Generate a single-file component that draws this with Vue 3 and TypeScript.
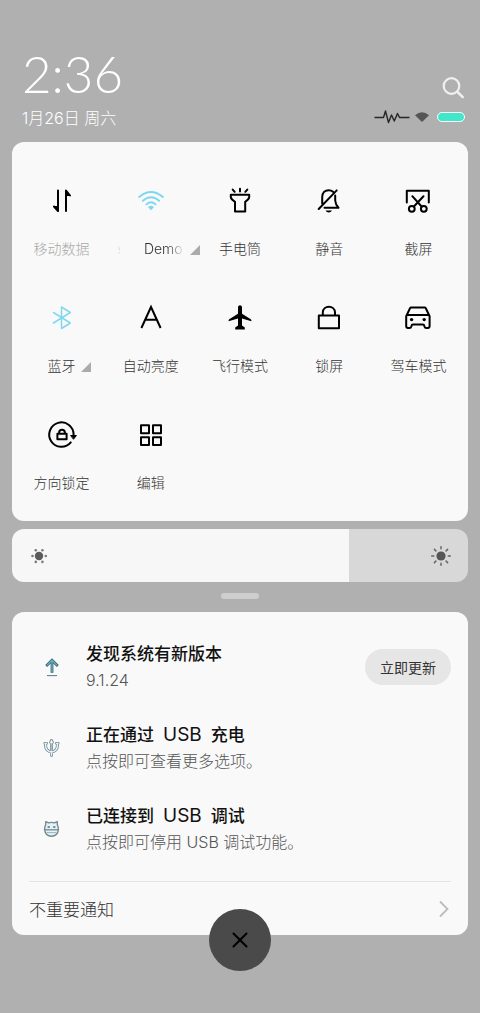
<script setup lang="ts">
import { computed, ref } from 'vue'

interface Tile {
  id: string
  label: string
  state?: 'on' | 'disabled'
  more?: boolean
}

interface Notice {
  id: string
  title: string[]
  text: string
  action?: string
}

const tiles: Tile[] = [
  { id: 'data', label: '移动数据', state: 'disabled' },
  { id: 'wifi', label: 'Demo', state: 'on', more: true },
  { id: 'torch', label: '手电筒' },
  { id: 'mute', label: '静音' },
  { id: 'shot', label: '截屏' },
  { id: 'bluetooth', label: '蓝牙', state: 'on', more: true },
  { id: 'auto', label: '自动亮度' },
  { id: 'plane', label: '飞行模式' },
  { id: 'lock', label: '锁屏' },
  { id: 'car', label: '驾车模式' },
  { id: 'rotate', label: '方向锁定' },
  { id: 'edit', label: '编辑' },
]

const notices: Notice[] = [
  { id: 'update', title: ['发现系统有新版本'], text: '9.1.24', action: '立即更新' },
  { id: 'usb', title: ['正在通过', 'USB', '充电'], text: '点按即可查看更多选项。' },
  { id: 'debug', title: ['已连接到', 'USB', '调试'], text: '点按即可停用 USB 调试功能。' },
]

const brightness = ref(74)
const fill = computed(() => ({ '--level': brightness.value + '%' }))
</script>

<template>
  <main class="shade">
    <header class="head">
      <div>
        <div class="time">2:36</div>
        <div class="date">1月26日 周六</div>
      </div>
      <div class="side">
        <button class="search" type="button" aria-label="搜索">
          <svg width="24" height="24" viewBox="0 0 24 24" fill="none" stroke="#f0f0f0" stroke-width="2.2" stroke-linecap="round">
            <circle cx="10.5" cy="10" r="7.8" /><path d="M16.2 15.7 21.7 21.2" stroke-width="2.6" />
          </svg>
        </button>
        <div class="status">
          <svg width="36" height="14" viewBox="0 0 36 14" fill="none" stroke="#262626" stroke-width="1.4" stroke-linejoin="round">
            <path d="M0.5 7.5H9.5L11.5 1 14.5 12.5 17.5 5 20.3 11 23.5 3.5 25.5 7.5H35.5" />
          </svg>
          <svg width="14" height="10" viewBox="0 0 14 10" fill="#555"><path d="M0 3.2Q7-2.8 14 3.2L7 10Z" /></svg>
          <span class="battery"></span>
        </div>
      </div>
    </header>

    <section class="panel tiles">
      <button v-for="t in tiles" :key="t.id" type="button" class="tile" :class="t.state">
        <svg class="icon" viewBox="0 0 32 32" fill="none" stroke="currentColor" stroke-width="2" stroke-linecap="round" stroke-linejoin="round">
          <g v-if="t.id === 'data'">
            <path d="M12 5.5V26L8 21.5M20 26V5.5L24 10.5" />
            <path d="M12 26 8 21.5H12ZM20 5.5 24 10.5H20Z" fill="currentColor" stroke-width="1" />
          </g>
          <g v-else-if="t.id === 'wifi'" stroke-width="1.9">
            <path d="M4 12Q16 1.8 28 12M7.8 15.8Q16 8.6 24.2 15.8M11.4 19.4Q16 15.2 20.6 19.4" />
            <path d="M13 22.2Q16 19.4 19 22.2L16 25.2Z" fill="currentColor" stroke="none" />
          </g>
          <g v-else-if="t.id === 'torch'">
            <path d="M6.8 9.7H25.2V12.2Q25 14.5 21.2 16.8V26.5H11V16.8Q7 14.5 6.8 12.2ZM16 3.8V6.6M8.7 4.6 10.7 6.8M23.3 4.6 21.3 6.8" />
          </g>
          <g v-else-if="t.id === 'mute'">
            <path d="M9.2 18.5V12.2C9.2 7.8 12 5.2 15.6 5.2Q18.4 5.2 20 6.8M22.2 10.5V15.5Q22.6 20 25.5 22.8H11.5M5.7 24 23.7 5.4" />
            <path d="M12.5 25.4H19Q18 27.4 15.8 27.4T12.5 25.4Z" fill="currentColor" stroke="none" />
          </g>
          <g v-else-if="t.id === 'shot'">
            <path d="M4.8 17.5V5.8H26.8V17.5M10.3 11.2 19.6 21.5M21.5 11.2 11.9 21.5" />
            <circle cx="9.8" cy="23.8" r="2.9" /><circle cx="21.8" cy="23.8" r="2.9" />
          </g>
          <path v-else-if="t.id === 'bluetooth'" stroke-width="1.5" d="M7.5 21 24.3 10.5 15.5 5V26.5L24.3 21 7.5 10.5" />
          <path v-else-if="t.id === 'auto'" stroke-linecap="butt" stroke-linejoin="miter" d="M6.4 26 16 5 25.6 26M9.8 17.7H22.2" />
          <path v-else-if="t.id === 'plane'" fill="currentColor" stroke="none" d="M16 3.2C17.2 3.2 18 4.2 18 5.4V11.8L26.8 17.2Q27.6 17.8 27.4 19.2L18 16.6V23.4L20.8 25.4V27.4H11.2V25.4L14 23.4V16.6L4.6 19.2Q4.4 17.8 5.2 17.2L14 11.8V5.4C14 4.2 14.8 3.2 16 3.2Z" />
          <path v-else-if="t.id === 'lock'" d="M5.8 13.5H26V26.3H5.8ZM9.8 13.5V10.5C9.8 2.8 22 2.8 22 10.5V13.5" />
          <g v-else-if="t.id === 'car'">
            <path d="M4.2 14.2 8 6.3Q8.4 5.6 9.2 5.6H22.6Q23.4 5.6 23.8 6.3L27.6 14.2V24Q27.6 26 25.8 26H24.4Q22.8 26 22.4 24.2 22.1 22.6 20.8 22.6H11Q9.7 22.6 9.4 24.2 9 26 7.4 26H6Q4.2 26 4.2 24ZM5.2 13H26.6" />
            <circle cx="9.6" cy="17.6" r="1.7" fill="currentColor" stroke="none" /><circle cx="22.2" cy="17.6" r="1.7" fill="currentColor" stroke="none" />
          </g>
          <g v-else-if="t.id === 'rotate'">
            <path d="M24.8 23.4A12.2 12.2 0 1 1 27.6 16" />
            <path d="M25 16.5H30.4L27.7 20Z" fill="currentColor" stroke-width="1" />
            <path d="M11.4 14.7H20.6V20.3H11.4ZM13.2 14.5V13.2C13.2 9.8 18.8 9.8 18.8 13.2V14.5" />
          </g>
          <path v-else d="M6 6.3H14V14.2H6ZM18 6.3H26V14.2H18ZM6 18.2H14V26.1H6ZM18 18.2H26V26.1H18Z" />
        </svg>
        <span class="label">
          <span v-if="t.id === 'wifi'" class="marquee"><span>e</span><span>{{ t.label }}</span></span>
          <template v-else>{{ t.label }}</template>
          <svg v-if="t.more" class="corner" viewBox="0 0 10 10" fill="#ababab"><path d="M10 0V10H0Z" /></svg>
        </span>
      </button>
    </section>

    <div class="bright">
      <input v-model.number="brightness" class="range" :style="fill" type="range" min="0" max="100" aria-label="亮度" />
      <svg class="sun low" viewBox="0 0 22 22" fill="#5a5a5a">
        <circle cx="11" cy="11" r="4.2" />
        <g fill="#7a7a7a"><circle cx="4.5" cy="11" r="1.3" /><circle cx="17.8" cy="11" r="1.3" /><circle cx="7.8" cy="5.2" r="1.3" /><circle cx="14.4" cy="5.2" r="1.3" /><circle cx="7.8" cy="16.9" r="1.3" /><circle cx="14.4" cy="16.9" r="1.3" /></g>
      </svg>
      <svg class="sun high" viewBox="0 0 22 22" fill="#555" stroke="#666" stroke-width="1.5" stroke-linecap="round">
        <circle cx="11" cy="11" r="4.6" stroke="none" />
        <path d="M11 1.7V3.8M11 18.2V20.3M1.7 11H3.8M18.2 11H20.3M4.4 4.4 5.9 5.9M16.1 16.1 17.6 17.6M4.4 17.6 5.9 16.1M16.1 5.9 17.6 4.4" />
      </svg>
    </div>

    <div class="grip"></div>

    <section class="panel notices">
      <article v-for="n in notices" :key="n.id" class="notice">
        <svg v-if="n.id === 'update'" class="badge" viewBox="0 0 20 20" fill="none">
          <path d="M10 15.8V3.5M4.2 9 10 3.2 15.8 9" stroke="#3c6673" stroke-width="2.8" />
          <path d="M10 15V4M4.9 8.4 10 3.4 15.1 8.4" stroke="#6bb5c6" stroke-width="1.2" />
          <path d="M5 18.6H15" stroke="#5d8794" stroke-width="1.1" />
        </svg>
        <svg v-else-if="n.id === 'usb'" class="badge" viewBox="0 0 20 20" fill="none" stroke-linejoin="round" stroke-linecap="round">
          <g stroke="#71868e" stroke-width="3">
            <path d="M3.6 5.5V8C3.8 11.4 6 13.4 9.5 14 13 13.4 15.2 11.4 15.4 8V5.5M9.5 4V17.2" />
            <path d="M9.5 2.4 8.6 4.4H10.4ZM2.8 5.3H4.6M14.4 5.3H16.2" stroke-width="2.8" />
          </g>
          <g stroke="#e3f2f6" stroke-width="1.5">
            <path d="M3.6 5.5V8C3.8 11.4 6 13.4 9.5 14 13 13.4 15.2 11.4 15.4 8V5.5M9.5 4V17.2" />
            <path d="M9.5 2.4 8.6 4.4H10.4ZM2.8 5.3H4.6M14.4 5.3H16.2" stroke-width="1.2" />
          </g>
          <path d="M9.5 6V12.5" stroke="#8ba3ab" stroke-width="0.7" />
        </svg>
        <svg v-else class="badge" viewBox="0 0 20 20" fill="#e3f2f6" stroke="#78888f" stroke-width="1.4" stroke-linejoin="round">
          <path d="M3.6 6 3.8 2.6 6.6 3.8Q9.5 2.9 12.4 3.8L15.2 2.6 15.4 6Q16.6 8 16.4 10.6 15.6 17.2 9.5 17.2T2.6 10.6Q2.4 8 3.6 6Z" />
          <path d="M3 10.8H16" stroke-width="1.3" />
          <path d="M5.6 8H7.8M11.2 8H13.4" stroke="#4b6f7b" stroke-width="1.6" />
          <path d="M4.6 13.6H14.4" stroke="#9bb9c2" stroke-width="1.1" />
        </svg>
        <div class="body">
          <h2 class="title"><span v-for="part in n.title" :key="part" :class="{ latin: part === 'USB' }">{{ part }}</span></h2>
          <p class="text">{{ n.text }}</p>
        </div>
        <button v-if="n.action" class="action" type="button">{{ n.action }}</button>
      </article>
      <a class="minor" href="#">
        <span>不重要通知</span>
        <svg width="10" height="18" viewBox="0 0 10 18" fill="none" stroke="#bcbcbc" stroke-width="1.8"><path d="M1 1.5 8.5 9 1 16.5" /></svg>
      </a>
    </section>

    <button class="close" type="button" aria-label="关闭">
      <svg width="18" height="18" viewBox="0 0 18 18" fill="none" stroke="#000" stroke-width="2.1" stroke-linecap="round"><path d="M2.5 2.5 15.5 15.5M15.5 2.5 2.5 15.5" /></svg>
    </button>
  </main>
</template>

<style>
body {
  margin: 0;
  background: #b0b0b0;
}
</style>

<style scoped>
.shade {
  box-sizing: border-box;
  min-height: 100vh;
  padding: 46px 12px 40px;
  display: flex;
  flex-direction: column;
  background: #b0b0b0;
  font-family: Inter, "Noto Sans CJK SC", sans-serif;
}
button {
  border: 0;
  padding: 0;
  background: none;
  font-family: inherit;
  cursor: pointer;
}
svg {
  display: block;
  flex: none;
}
.head {
  display: flex;
  justify-content: space-between;
  align-items: flex-end;
  padding: 0 3px 12px 10px;
  color: #fff;
}
.time {
  font: 300 51px/56px Lato, sans-serif;
}
.date {
  margin-top: 4px;
  font-size: 16px;
  font-weight: 300;
  line-height: 24px;
}
.side {
  display: flex;
  flex-direction: column;
  align-items: flex-end;
  gap: 10px;
  padding-bottom: 6px;
}
.status {
  display: flex;
  align-items: center;
  gap: 5px;
}
.battery {
  box-sizing: border-box;
  width: 28px;
  height: 10px;
  margin-left: 3px;
  border: 1px solid #fff;
  border-radius: 5px;
  background: #3fe8cb;
}
.panel {
  border-radius: 12px;
  background: #f9f9f9;
}
.tiles {
  display: grid;
  grid-template-columns: repeat(5, 1fr);
  row-gap: 37px;
  padding: 43px 5px 22px;
}
.tile {
  display: flex;
  flex-direction: column;
  align-items: center;
  gap: 22px;
  height: 80px;
  color: #000;
}
.icon {
  width: 32px;
  height: 32px;
}
.on .icon {
  color: #80d8f0;
}
.label {
  position: relative;
  font-size: 14px;
  font-weight: 300;
  line-height: 20px;
  color: #333;
  white-space: nowrap;
}
.disabled .label {
  color: #aaa;
}
.corner {
  position: absolute;
  left: 100%;
  bottom: 4px;
  width: 10px;
  height: 10px;
  margin-left: 5px;
}
.marquee {
  display: flex;
  gap: 23px;
  width: 76px;
  margin: 0 -4px;
  mask-image: linear-gradient(90deg, transparent 4px, #000 20px, #000 54px, transparent 72px);
}
.bright {
  position: relative;
  height: 53px;
  margin-top: 8px;
}
.range {
  display: block;
  appearance: none;
  width: 100%;
  height: 100%;
  margin: 0;
  border-radius: 12px;
  background: linear-gradient(90deg, #f7f7f7 var(--level), #d8d8d8 var(--level));
}
.range::-webkit-slider-thumb {
  appearance: none;
  width: 20px;
  height: 53px;
  background: transparent;
}
.sun {
  position: absolute;
  top: 16px;
  width: 22px;
  height: 22px;
  pointer-events: none;
}
.low {
  left: 16px;
}
.high {
  right: 16px;
}
.grip {
  align-self: center;
  width: 38px;
  height: 6px;
  margin: 11px 0 13px;
  border-radius: 3px;
  background: #cecece;
}
.notices {
  padding: 14px 17px 0;
}
.notice {
  display: flex;
  align-items: center;
  height: 81px;
}
.badge {
  width: 20px;
  height: 20px;
  margin: 0 24px 0 13px;
}
.body {
  flex: 1;
}
.title {
  display: flex;
  gap: 9px;
  margin: 0;
  font-size: 17px;
  font-weight: 500;
  line-height: 26px;
  color: #111;
}
.latin {
  font-size: 19px;
  font-weight: 400;
}
.text {
  margin: 0;
  font-size: 16px;
  font-weight: 300;
  line-height: 26px;
  color: #555;
}
.action {
  height: 36px;
  padding: 0 15px;
  border-radius: 18px;
  background: #e6e6e6;
  font-size: 14px;
  font-weight: 400;
  color: #333;
}
.minor {
  display: flex;
  align-items: center;
  justify-content: space-between;
  height: 53px;
  margin-top: 12px;
  padding-right: 2px;
  border-top: 1px solid #e3e3e3;
  font-size: 17px;
  font-weight: 300;
  color: #333;
  text-decoration: none;
}
.close {
  position: relative;
  display: flex;
  align-items: center;
  justify-content: center;
  align-self: center;
  width: 62px;
  height: 62px;
  margin-top: -26px;
  border-radius: 50%;
  background: #4a4a4a;
}
</style>
